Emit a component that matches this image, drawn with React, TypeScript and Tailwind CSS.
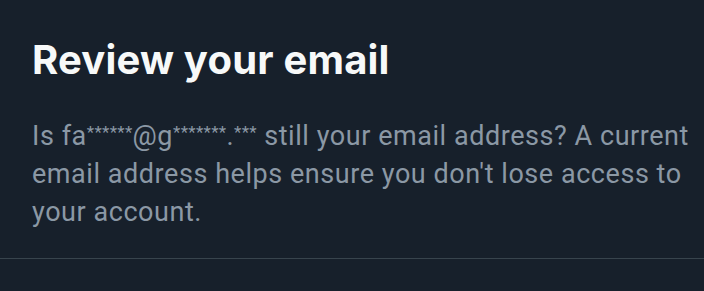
function Stars({ n }: { n: number }) {
  return (
    <span className="text-[17px] leading-none align-[7px] tracking-[0.3px]">{'*'.repeat(n)}</span>
  );
}

export default function App() {
  return (
    <div className="w-[704px] h-[291px] bg-[#17202b] flex flex-col overflow-hidden">
      <div className="pl-[32px] pr-[12px] pt-[36px] pb-[27px]">
        <h1 className="font-['Inter',sans-serif] font-bold text-[40px] leading-[48px] text-[#f7f9f9] tracking-[0.2px]">
          Review your email
        </h1>
        <p className="mt-[33px] font-['Roboto',sans-serif] text-[27px] leading-[38px] text-[#8b98a5] tracking-[0.55px]">
          Is fa<Stars n={6} />@g<Stars n={7} />.<Stars n={3} /> still your email address? A current email address helps ensure you don't lose access to your account.
        </p>
      </div>
      <div className="h-px bg-[#38444d]" />
    </div>
  );
}
